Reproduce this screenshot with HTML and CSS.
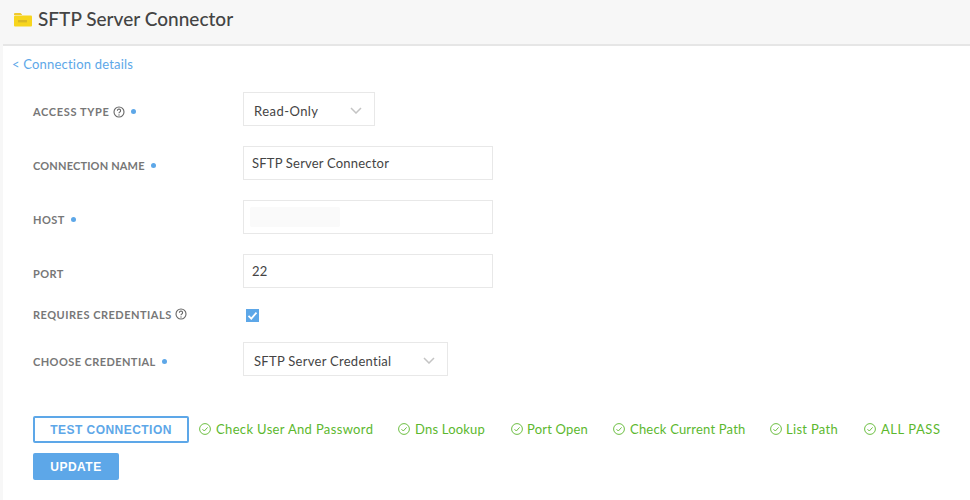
FILE: index.html
```html
<!DOCTYPE html>
<html lang="en">
<head>
<meta charset="utf-8">
<title>SFTP Server Connector</title>
<link rel="stylesheet" href="styles.css">
</head>
<body>
<header class="topbar">
  <svg class="folder" width="18" height="15" viewBox="0 0 18 15"><path d="M0 2a1 1 0 0 1 1-1h5.5l1.5 1.6V3H0z" fill="#f0c92e"/><rect y="3.6" width="18" height="11" rx="1" fill="#f7d51d"/><rect x="4" y="8" width="9" height="2.4" fill="#d9b824"/></svg>
  <h1 class="title">SFTP Server Connector</h1>
</header>
<main class="content">
  <a class="back" href="#">&lt; Connection details</a>
  <form class="form">
    <div class="row">
      <div class="label wide-label">ACCESS TYPE <svg class="help" viewBox="0 0 12 12"><circle cx="6" cy="6" r="5" fill="none" stroke="#666" stroke-width="1.1"/><path d="M4.4 4.7a1.6 1.6 0 1 1 2.4 1.4c-.6.35-.8.6-.8 1.2" fill="none" stroke="#666" stroke-width="1.1"/><circle cx="6" cy="9" r=".7" fill="#666"/></svg><span class="dot first"></span></div>
      <div class="select short"><span>Read-Only</span><svg class="chev" viewBox="0 0 12 7"><path d="M1 1l5 5 5-5" fill="none" stroke="#c4c4c4" stroke-width="1.5"/></svg></div>
    </div>
    <div class="row">
      <div class="label tight-label">CONNECTION NAME<span class="dot"></span></div>
      <div class="input">SFTP Server Connector</div>
    </div>
    <div class="row">
      <div class="label">HOST<span class="dot"></span></div>
      <div class="input"><span class="redacted"></span></div>
    </div>
    <div class="row">
      <div class="label">PORT</div>
      <div class="input">22</div>
    </div>
    <div class="row check-row">
      <div class="label">REQUIRES CREDENTIALS <svg class="help" viewBox="0 0 12 12"><circle cx="6" cy="6" r="5" fill="none" stroke="#666" stroke-width="1.1"/><path d="M4.4 4.7a1.6 1.6 0 1 1 2.4 1.4c-.6.35-.8.6-.8 1.2" fill="none" stroke="#666" stroke-width="1.1"/><circle cx="6" cy="9" r=".7" fill="#666"/></svg></div>
      <span class="checkbox"><svg viewBox="0 0 13 13" width="13" height="13"><path d="M2.5 6.8l2.8 2.8 5.2-6" fill="none" stroke="#fff" stroke-width="1.8"/></svg></span>
    </div>
    <div class="row">
      <div class="label">CHOOSE CREDENTIAL<span class="dot"></span></div>
      <div class="select wide"><span>SFTP Server Credential</span><svg class="chev" viewBox="0 0 12 7"><path d="M1 1l5 5 5-5" fill="none" stroke="#c4c4c4" stroke-width="1.5"/></svg></div>
    </div>
  </form>
  <div class="test-row">
    <button class="btn outline" type="button">TEST CONNECTION</button>
    <ul class="checks">
      <li class="c1"><svg class="ok" viewBox="0 0 12 12"><circle cx="6" cy="6" r="5.4" fill="none" stroke="#5cb82e" stroke-width=".9"/><path d="M3.5 6.2l1.8 1.8 3.3-3.6" fill="none" stroke="#5cb82e" stroke-width=".9"/></svg>Check User And Password</li>
      <li class="c2"><svg class="ok" viewBox="0 0 12 12"><circle cx="6" cy="6" r="5.4" fill="none" stroke="#5cb82e" stroke-width=".9"/><path d="M3.5 6.2l1.8 1.8 3.3-3.6" fill="none" stroke="#5cb82e" stroke-width=".9"/></svg>Dns Lookup</li>
      <li class="c3"><svg class="ok" viewBox="0 0 12 12"><circle cx="6" cy="6" r="5.4" fill="none" stroke="#5cb82e" stroke-width=".9"/><path d="M3.5 6.2l1.8 1.8 3.3-3.6" fill="none" stroke="#5cb82e" stroke-width=".9"/></svg>Port Open</li>
      <li class="c4"><svg class="ok" viewBox="0 0 12 12"><circle cx="6" cy="6" r="5.4" fill="none" stroke="#5cb82e" stroke-width=".9"/><path d="M3.5 6.2l1.8 1.8 3.3-3.6" fill="none" stroke="#5cb82e" stroke-width=".9"/></svg>Check Current Path</li>
      <li class="c5"><svg class="ok" viewBox="0 0 12 12"><circle cx="6" cy="6" r="5.4" fill="none" stroke="#5cb82e" stroke-width=".9"/><path d="M3.5 6.2l1.8 1.8 3.3-3.6" fill="none" stroke="#5cb82e" stroke-width=".9"/></svg>List Path</li>
      <li class="c6"><svg class="ok" viewBox="0 0 12 12"><circle cx="6" cy="6" r="5.4" fill="none" stroke="#5cb82e" stroke-width=".9"/><path d="M3.5 6.2l1.8 1.8 3.3-3.6" fill="none" stroke="#5cb82e" stroke-width=".9"/></svg>ALL PASS</li>
    </ul>
  </div>
  <button class="btn solid" type="button">UPDATE</button>
</main>
</body>
</html>
```
FILE: styles.css
```css
* { box-sizing: border-box; }
html, body { margin: 0; height: 100%; }
body {
  width: 970px;
  height: 500px;
  overflow: hidden;
  background: #fff;
  font-family: "Lato", "Noto Sans", sans-serif;
  color: #444;
  border-left: 3px solid #f7f7f7;
}
.topbar {
  height: 46px;
  margin-left: -3px;
  background: #f7f7f7;
  border-bottom: 2px solid #e6e6e6;
  display: flex;
  align-items: center;
  padding: 0 0 6px 14px;
}
.folder { margin-right: 6px; margin-top: 1px; }
.title { margin: 0; font-size: 19px; font-weight: 500; color: #444; letter-spacing: .02px; line-height: 24px; }
.content { padding-left: 10px; }
.back {
  display: block;
  margin-top: 9px;
  margin-left: -1px;
  height: 18px;
  line-height: 18px;
  font-size: 13px;
  letter-spacing: .2px;
  color: #5da7e8;
  text-decoration: none;
}
.form { margin: 19px 0 0 20px; display: flex; flex-direction: column; gap: 20px; }
.row { display: flex; align-items: center; height: 34px; }
.check-row { height: 14px; }
.label {
  width: 210px;
  font-size: 11px;
  font-weight: 700;
  color: #777;
  letter-spacing: .42px;
  display: flex;
  align-items: center;
  padding-top: 5px;
  white-space: pre;
}
.wide-label { letter-spacing: .65px; }
.tight-label { letter-spacing: .17px; }
.check-row .label { padding-top: 0; margin-top: -2px; letter-spacing: .5px; }
.help { width: 12px; height: 12px; margin-left: 0; }
.dot { width: 5px; height: 5px; border-radius: 50%; background: #5da7e8; margin-left: 6px; }
.dot.first { margin-left: 6px; }
.input, .select {
  height: 34px;
  border: 1px solid #e8e8e8;
  background: #fff;
  font-size: 13px;
  color: #444;
  display: flex;
  align-items: center;
  letter-spacing: .2px;
}
.input { width: 250px; padding: 0 8px 1px; }
.select { justify-content: space-between; padding: 3px 12px 0 10px; letter-spacing: .28px; }
.select.short { width: 132px; }
.select.short span { letter-spacing: .45px; }
.select.wide { width: 205px; }
.chev { width: 12px; height: 7px; }
.redacted { display: block; width: 90px; height: 20px; background: #fafafa; border-radius: 2px; margin-left: -2px; margin-bottom: -1px; }
.checkbox { width: 13px; height: 13px; margin-left: 3px; background: #5da7e8; display: block; }
.checkbox svg { display: block; }
.test-row { display: flex; align-items: center; margin: 40px 0 0 20px; height: 27px; }
.btn {
  font-family: "Liberation Sans", sans-serif;
  font-size: 12px;
  font-weight: 700;
  letter-spacing: .47px;
  border-radius: 2px;
  height: 27px;
  padding: 0;
  display: block;
}
.btn.outline { width: 156px; background: #fff; color: #5da7e8; border: 2px solid #5da7e8; }
.btn.solid { width: 86px; margin: 10px 0 0 20px; background: #5da7e8; color: #fff; border: 0; }
.checks { list-style: none; margin: 0; padding: 0 0 1px; display: flex; }
.checks li { display: flex; align-items: center; font-size: 13px; color: #5cb82e; white-space: nowrap; letter-spacing: .2px; }
.ok { width: 12px; height: 12px; margin-right: 5px; flex: none; }
.checks .c1 { margin-left: 10px; width: 199px; letter-spacing: .35px; }
.checks .c2 { width: 113px; }
.checks .c3 { width: 102px; }
.checks .c3 .ok, .checks .c5 .ok { margin-right: 4px; }
.checks .c4 { width: 157px; }
.checks .c5 { width: 94px; letter-spacing: .3px; }
.checks .c6 { letter-spacing: .55px; }
```
